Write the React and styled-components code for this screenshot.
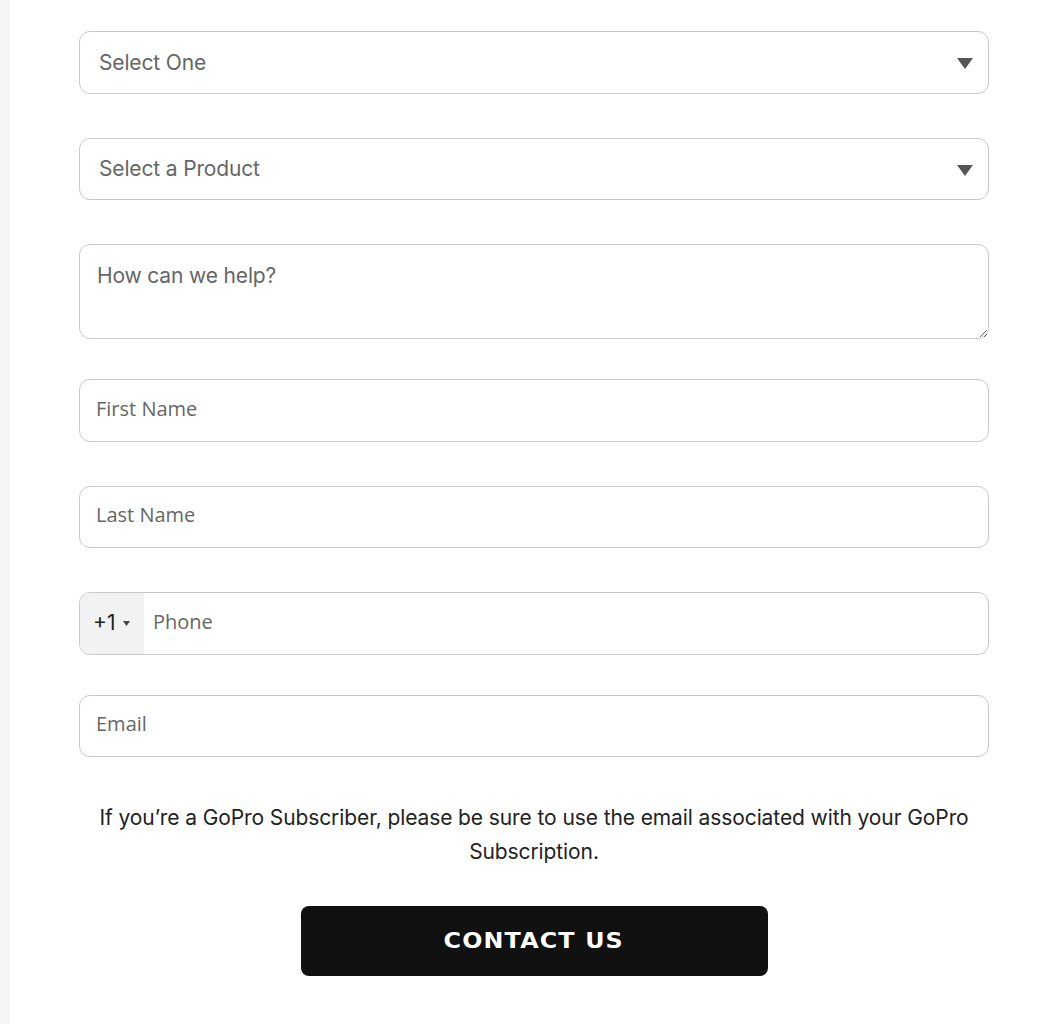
import React from "react";
import styled, { createGlobalStyle } from "styled-components";

const Global = createGlobalStyle`
  html, body { margin: 0; padding: 0; background: #fff; }
  body { font-family: Inter, "Liberation Sans", sans-serif; }
  * { box-sizing: border-box; }
`;

const Page = styled.div`
  display: flex;
  min-height: 1024px;
`;

const Strip = styled.div`
  width: 10px;
  background: #f5f5f5;
  flex: none;
`;

const Main = styled.main`
  flex: 1;
  padding: 31px 49px 40px 69px;
`;

const Form = styled.form`
  display: flex;
  flex-direction: column;
  width: 910px;
`;

const Field = styled.div`
  position: relative;
  margin-bottom: ${(p) => p.$gap ?? 44}px;
`;

const Select = styled.div`
  height: 62.5px;
  border: 1.5px solid #c9c9c9;
  border-radius: 11px;
  display: flex;
  align-items: center;
  justify-content: space-between;
  padding: 0 15px 0 19px;
  font-family: Inter, "Liberation Sans", sans-serif;
  font-size: 21px;
  color: #666;
  letter-spacing: -0.15px;
`;

const Arrow = styled.svg`
  width: 16px;
  height: 11px;
  margin-top: 3px;
`;

const TextArea = styled.textarea`
  display: block;
  width: 100%;
  height: 95px;
  border: 1.5px solid #c9c9c9;
  border-radius: 11px;
  padding: 18px 17px;
  font-family: Inter, "Liberation Sans", sans-serif;
  font-size: 21px;
  letter-spacing: -0.15px;
  resize: vertical;
  outline: none;
  &::placeholder { color: #666; }
`;

const InputBox = styled.div`
  height: 62.5px;
  border: 1.5px solid #c9c9c9;
  border-radius: 11px;
  display: flex;
  align-items: stretch;
  overflow: hidden;
`;

const Input = styled.input`
  flex: 1;
  border: none;
  outline: none;
  background: transparent;
  padding: 0 0 4px ${(p) => p.$pad ?? 16}px;
  font-family: "Open Sans", "Noto Sans", sans-serif;
  font-size: 20px;
  &::placeholder { color: #666; }
`;

const Prefix = styled.div`
  width: 64px;
  flex: none;
  background: #f2f2f2;
  display: flex;
  align-items: center;
  padding: 0 0 2px 13px;
  gap: 8px;
  font-family: Inter, "Liberation Sans", sans-serif;
  font-size: 21px;
  color: #222;
`;

const SmallArrow = styled.svg`
  width: 7px;
  height: 5px;
  margin-top: 2px;
`;

const Note = styled.p`
  margin: 44px 0 0;
  text-align: center;
  font-family: Inter, "Liberation Sans", sans-serif;
  font-size: 21px;
  line-height: 34px;
  color: #222;
  letter-spacing: -0.1px;
  padding: 0 10px;
`;

const Button = styled.button`
  align-self: center;
  margin-top: 37px;
  width: 467px;
  height: 70px;
  background: #111;
  color: #fff;
  border: none;
  border-radius: 8px;
  display: flex;
  align-items: center;
  justify-content: center;
  padding: 0;
  cursor: pointer;
`;

const ButtonLabel = styled.span`
  display: inline-block;
  font-family: "DejaVu Sans", "Liberation Sans", sans-serif;
  font-weight: 700;
  font-size: 20.5px;
  letter-spacing: 1px;
  transform: scaleX(1.16);
`;

const Tri = () => (
  <Arrow viewBox="0 0 16 11">
    <path d="M0 0 H16 L8 11 Z" fill="#555" />
  </Arrow>
);

export default function App() {
  return (
    <>
      <Global />
      <Page>
        <Strip />
        <Main>
          <Form onSubmit={(e) => e.preventDefault()}>
            <Field>
              <Select>
                <span>Select One</span>
                <Tri />
              </Select>
            </Field>
            <Field>
              <Select>
                <span>Select a Product</span>
                <Tri />
              </Select>
            </Field>
            <Field $gap={40}>
              <TextArea placeholder="How can we help?" />
            </Field>
            <Field>
              <InputBox>
                <Input placeholder="First Name" />
              </InputBox>
            </Field>
            <Field>
              <InputBox>
                <Input placeholder="Last Name" />
              </InputBox>
            </Field>
            <Field $gap={40}>
              <InputBox>
                <Prefix>
                  <span>+1</span>
                  <SmallArrow viewBox="0 0 7 5">
                    <path d="M0 0 H7 L3.5 5 Z" fill="#444" />
                  </SmallArrow>
                </Prefix>
                <Input $pad={9} placeholder="Phone" />
              </InputBox>
            </Field>
            <Field $gap={0}>
              <InputBox>
                <Input placeholder="Email" />
              </InputBox>
            </Field>
            <Note>
              If you’re a GoPro Subscriber, please be sure to use the email associated with your GoPro Subscription.
            </Note>
            <Button type="submit">
              <ButtonLabel>CONTACT US</ButtonLabel>
            </Button>
          </Form>
        </Main>
      </Page>
    </>
  );
}
